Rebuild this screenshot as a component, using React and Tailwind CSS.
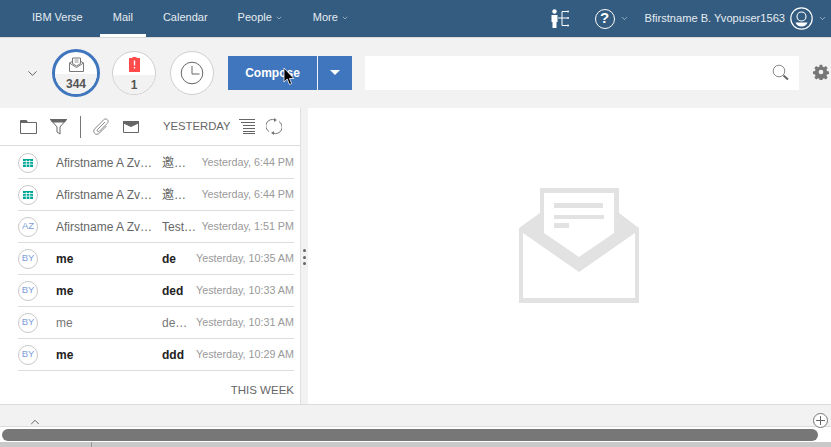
import React from "react";
import { ChevronDown, ChevronUp } from "lucide-react";

const rows = [
  { badge: "cal", from: "Afirstname A Zvapuser1", subject: "邀请会议通知", time: "Yesterday, 6:44 PM" },
  { badge: "cal", from: "Afirstname A Zvapuser1", subject: "邀请会议通知", time: "Yesterday, 6:44 PM" },
  { badge: "AZ", from: "Afirstname A Zvapuser1", subject: "Test message", time: "Yesterday, 1:51 PM" },
  { badge: "BY", from: "me", subject: "de", time: "Yesterday, 10:35 AM", bold: true },
  { badge: "BY", from: "me", subject: "ded", time: "Yesterday, 10:33 AM", bold: true },
  { badge: "BY", from: "me", subject: "dedede", time: "Yesterday, 10:31 AM", light: true },
  { badge: "BY", from: "me", subject: "ddd", time: "Yesterday, 10:29 AM", bold: true },
];

const NavItem = ({ label, active, caret }) => (
  <div className={`h-[37px] px-[13px] flex items-center gap-[3px] text-[11px] text-[#e6ecf1] border-b-[3px] pt-[1px] ${active ? "border-white" : "border-transparent"}`}>
    {label}
    {caret && <ChevronDown size={8} strokeWidth={1.5} />}
  </div>
);

const CalendarIcon = () => (
  <svg width="10" height="8" viewBox="0 0 10 8">
    <rect width="10" height="8" fill="#00a896" />
    <path d="M0 2.500h10M0 5.200h10M3.300 1v7M6.700 1v7" stroke="#fff" strokeWidth="0.8" />
  </svg>
);

const Row = ({ row }) => (
  <div className="h-[32px] shrink-0 flex items-center border-b border-[#dcdcdc] text-[12px]">
    <div className="w-[20px] h-[20px] rounded-full border border-[#c8c8c8] flex items-center justify-center text-[9.5px] text-[#7ba0d6] shrink-0">
      {row.badge === "cal" ? <CalendarIcon /> : row.badge}
    </div>
    <div className={`ml-[18px] w-[100px] truncate shrink-0 ${row.bold ? "font-bold text-[#222]" : row.light ? "text-[#777]" : "text-[#666]"}`}>{row.from}</div>
    <div className={`ml-[6px] flex-1 min-w-0 truncate ${row.bold ? "font-bold text-[#222]" : row.light ? "text-[#777]" : "text-[#666]"}`}>{row.subject}</div>
    <div className="ml-[4px] shrink-0 text-[10.75px] text-[#999] whitespace-nowrap">{row.time}</div>
  </div>
);

export default function App() {
  return (
    <div className="w-[831px] h-[447px] overflow-hidden flex flex-col bg-[#f2f2f2] font-['Liberation_Sans','Noto_Sans_CJK_SC',Arial,sans-serif]">
      {/* top nav */}
      <div className="h-[38px] shrink-0 bg-[#335c80] border-b border-[#d8d8d8] flex items-start gap-[4px] pl-[19px] pr-[4px]">
        <NavItem label="IBM Verse" />
        <NavItem label="Mail" active />
        <NavItem label="Calendar" />
        <NavItem label="People" caret />
        <NavItem label="More" caret />
        <div className="ml-auto h-[37px] flex items-center text-[#e6ecf1]">
          <svg width="19" height="20" viewBox="0 0 19 20" fill="#fff">
            <circle cx="3.500" cy="2.500" r="2.200" />
            <path d="M0.500 6h6v7h-1v6h-4v-6h-1z" />
            <path d="M7 9h4M11 2.500v14M11 2.500h5M11 9h5M11 16.500h5" stroke="#fff" strokeWidth="1" fill="none" />
            <circle cx="17" cy="2.500" r="1" />
            <circle cx="17" cy="9" r="1" />
            <circle cx="17" cy="16.500" r="1" />
          </svg>
          <div className="ml-[25px] w-[20px] h-[20px] rounded-full border-[1.5px] border-white flex items-center justify-center text-[15px] font-bold text-white">?</div>
          <ChevronDown className="ml-[5px]" size={9} strokeWidth={1.5} />
          <span className="ml-[16px] text-[11.1px]">Bfirstname B. Yvopuser1563</span>
          <svg className="ml-[5px]" width="23" height="23" viewBox="0 0 23 23" fill="none" stroke="#fff">
            <circle cx="11.500" cy="11.500" r="10.700" strokeWidth="1.200" />
            <circle cx="11.500" cy="9.500" r="4.500" strokeWidth="1.100" />
            <path d="M5.500 15.500h12c-1 2.500-3 4-6 4s-5-1.500-6-4z" fill="#fff" stroke="none" />
          </svg>
          <ChevronDown className="ml-[5px]" size={9} strokeWidth={1.5} />
        </div>
      </div>

      {/* toolbar */}
      <div className="h-[70px] shrink-0 flex items-center pl-[25px] pb-[1px]">
        <ChevronDown size={15} strokeWidth={1.5} className="text-[#555] mt-[1px]" />
        <div className="ml-[12px] w-[48px] h-[48px] rounded-full border-[3px] border-[#3f76bd] bg-white overflow-hidden flex flex-col items-center">
          <svg className="mt-[5px]" width="15" height="15" viewBox="0 0 15 15" fill="none" stroke="#777">
            <path d="M.5 6l2.500-1.500M14.500 6L12 4.500M.5 6v8.500h14V6" />
            <path d="M.5 6l7 4.500 7-4.500" />
            <path d="M3.500 1h8v5.500l-4 2.500-4-2.500z" fill="#fff" />
            <path d="M5.500 3h4M5.500 5h4" stroke="#999" />
          </svg>
          <div className="mt-[2px] w-full flex-1 bg-[#f2f2f2] text-center text-[12px] font-bold text-[#555] pt-[1px]">344</div>
        </div>
        <div className="ml-[12px] w-[44px] h-[44px] rounded-full border border-[#cfcfcf] bg-white overflow-hidden flex flex-col items-center">
          <svg className="mt-[5px]" width="11" height="15" viewBox="0 0 11 15">
            <path d="M0 1h3.500V0h4v1H11v14H0z" fill="#ff4b4b" />
            <path d="M4.800 3.500h1.400v5H4.800zM4.800 10h1.400v1.500H4.800z" fill="#fff" />
          </svg>
          <div className="mt-[3px] w-full flex-1 bg-[#f2f2f2] text-center text-[12px] font-bold text-[#555] pt-[1px]">1</div>
        </div>
        <div className="ml-[14px] w-[44px] h-[44px] rounded-full border border-[#cfcfcf] bg-white flex items-center justify-center">
          <svg width="24" height="24" viewBox="0 0 24 24" fill="none" stroke="#666" strokeWidth="1">
            <circle cx="12" cy="12" r="10.800" />
            <path d="M12 5v8h7.500" />
          </svg>
        </div>
        <div className="relative ml-[14px] w-[89px] h-[34px] bg-[#3f76bd] flex items-center justify-center text-[12px] font-bold text-white">
          Compose
          <svg className="absolute left-[55px] top-[12px]" width="12" height="18" viewBox="0 0 12 18">
            <path d="M1 0v14l3.200-3 2.300 5.500 2.200-1-2.300-5h4.400z" fill="#000" stroke="#fff" strokeWidth="0.800" />
          </svg>
        </div>
        <div className="ml-[1px] w-[34px] h-[34px] bg-[#3f76bd] flex items-center justify-center">
          <div className="w-0 h-0 border-x-[5px] border-x-transparent border-t-[5px] border-t-white" />
        </div>
        <div className="ml-[13px] w-[434px] h-[34px] bg-white flex items-center justify-end pr-[9px]">
          <svg width="18" height="18" viewBox="0 0 18 18" fill="none">
            <circle cx="7" cy="7" r="5.800" stroke="#888" strokeWidth="1" />
            <path d="M11.500 11.500l4.500 4" stroke="#666" strokeWidth="2" />
          </svg>
        </div>
        <svg className="ml-[14px] mb-[1px] shrink-0" width="16" height="16" viewBox="0 0 24 24" fill="#777">
          <path d="M10 1h4l.6 3.100 2 .8 2.600-1.800 2.800 2.800-1.800 2.600.8 2 3 .6v4l-3 .6-.8 2 1.800 2.600-2.800 2.800-2.600-1.800-2 .8-.6 3h-4l-.6-3-2-.8-2.600 1.800-2.800-2.800 1.800-2.600-.8-2-3-.6v-4l3-.6.8-2-1.800-2.600 2.800-2.800 2.600 1.800 2-.8zM12 8.500a3.500 3.500 0 1 0 0 7 3.500 3.500 0 0 0 0-7z" fillRule="evenodd" />
        </svg>
      </div>

      {/* panes */}
      <div className="h-[297px] shrink-0 flex bg-white border-b border-[#dcdcdc]">
        <div className="w-[300px] shrink-0 flex flex-col pl-[18px] pr-[6px] overflow-hidden">
          <div className="h-[38px] mb-[1px] -ml-[18px] -mr-[6px] pl-[20px] pr-[6px] flex items-center border-b border-[#dcdcdc] shrink-0">
            <svg width="17" height="15" viewBox="0 0 17 15" fill="none" stroke="#666">
              <path d="M.5 14.500V3.500h16v11z" />
              <path d="M.5 3.500v-2h6l1 2z" fill="#666" />
            </svg>
            <svg className="ml-[13px]" width="17" height="16" viewBox="0 0 17 16" fill="none" stroke="#666">
              <path d="M.5.500h16L10 8v7l-3-2V8z" />
              <path d="M.5.500h16l-2 2.500H2.500z" fill="#666" />
            </svg>
            <div className="ml-[13px] w-[1px] h-[22px] bg-[#777]" />
            <svg className="ml-[11px]" width="18" height="17" viewBox="0 0 18 17" fill="none" stroke="#888">
              <path d="M13 4L5.500 11.500c-1.200 1.200.6 3 1.800 1.800l8-8c2.500-2.500-1-6-3.500-3.500L3 10.500c-3.500 3.500 1 8 4.500 4.500l7-7" />
            </svg>
            <svg className="ml-[13px]" width="16" height="12" viewBox="0 0 16 12" fill="none" stroke="#666">
              <path d="M.5.500h15v11H.5z" />
              <path d="M.5.500h15v1.500L8 5.500.5 2z" fill="#666" />
            </svg>
            <span className="ml-[24px] text-[11.3px] text-[#666]">YESTERDAY</span>
            <svg className="ml-[8px]" width="16" height="15" viewBox="0 0 16 15" stroke="#666">
              <path d="M0 .5h16M2 3.500h14M4 6.500h12M4 9.500h12M4 12.500h12M4 14.500h12" />
            </svg>
            <svg className="ml-[11px]" width="16" height="17" viewBox="0 0 16 17" fill="none" stroke="#777">
              <path d="M3 13.500A6.500 6.500 0 0 1 9 2M13 3.500A6.500 6.500 0 0 1 7 15" />
              <path d="M8 0l3 2-3 2zM8 13l-3 2 3 2z" fill="#777" stroke="none" />
            </svg>
          </div>
          {rows.map((row, i) => (
            <Row key={i} row={row} />
          ))}
          <div className="h-[33px] shrink-0 flex items-center justify-end text-[11.5px] text-[#666] pt-[6px]">THIS WEEK</div>
        </div>
        <div className="w-[8px] shrink-0 bg-[#f2f2f2] border-l border-[#e0e0e0] flex flex-col items-center justify-center gap-[3.5px] pt-[2px]">
          <div className="w-[3px] h-[3px] rounded-full bg-[#666]" />
          <div className="w-[3px] h-[3px] rounded-full bg-[#666]" />
          <div className="w-[3px] h-[3px] rounded-full bg-[#666]" />
        </div>
        <div className="flex-1 flex items-center justify-center pl-[19px] pb-[22px]">
          <svg width="120" height="115" viewBox="0 0 120 115">
            <path d="M21 0h79v25l20 15v75H0V40l21-15z" fill="#e2e2e2" />
            <path d="M4 45l56 39 56-39v65H4z" fill="#fff" />
            <path d="M25 5h70v40L60 69 25 45z" fill="#fff" />
            <path d="M35 15h49v5H35zM35 27h50v4H35zM35 35h15v5H35z" fill="#e2e2e2" />
          </svg>
        </div>
      </div>

      {/* footer */}
      <div className="relative h-[21px] shrink-0 pl-[28px]">
        <ChevronUp size={14} strokeWidth={1.5} className="mt-[10px] text-[#555]" />
        <div className="absolute right-[3px] top-[8px] w-[15px] h-[15px] rounded-full border border-[#777] bg-white flex items-center justify-center">
          <svg width="9" height="9" viewBox="0 0 9 9" stroke="#666"><path d="M4.500 0v9M0 4.500h9" /></svg>
        </div>
      </div>
      <div className="h-[16px] shrink-0 bg-white flex items-center pl-[2px] pr-[13px] border-t border-[#dcdcdc]">
        <div className="w-full h-[12px] rounded-full bg-[#777]" />
      </div>
      <div className="flex-1 flex bg-[#c9c9c9]">
        <div className="w-[92px] border-r border-[#999]" />
        <div className="flex-1" />
      </div>
    </div>
  );
}
